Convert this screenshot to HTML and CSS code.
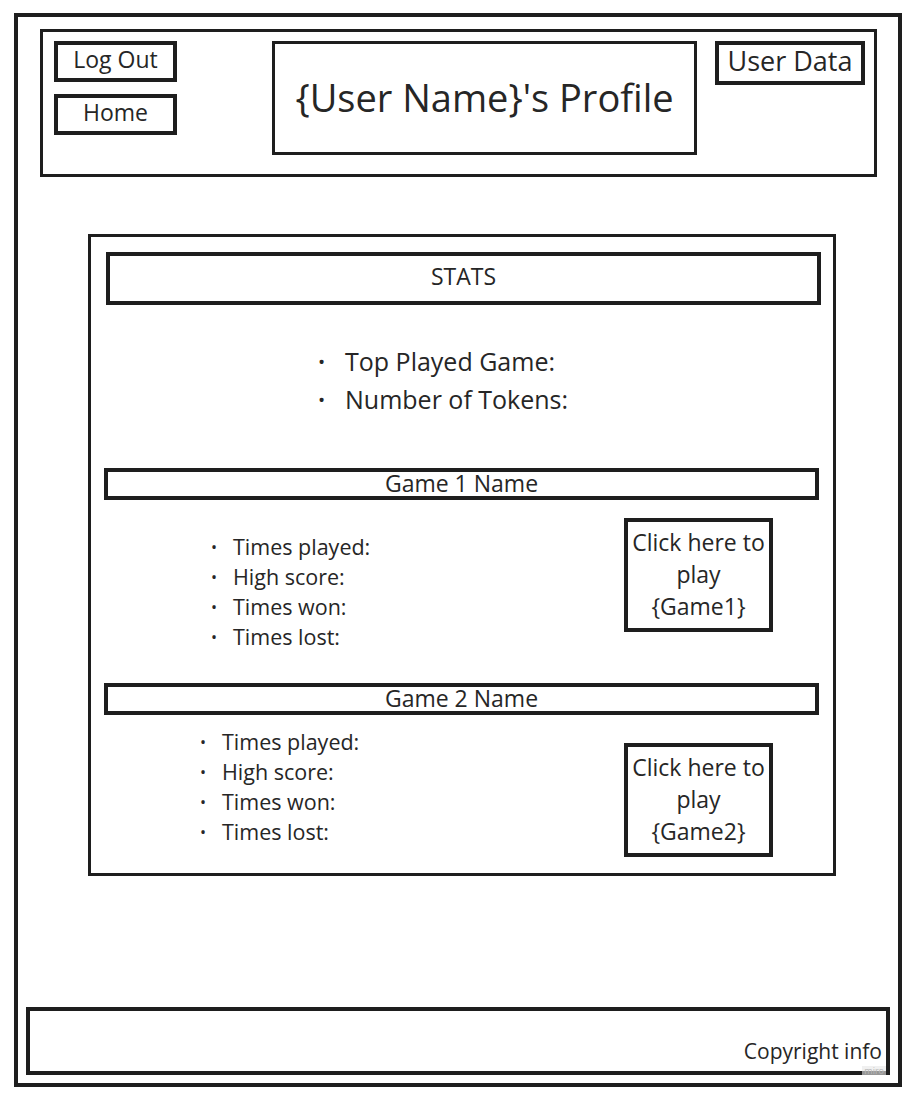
FILE: index.html
```html
<!DOCTYPE html>
<html lang="en">
<head>
  <meta charset="UTF-8">
  <meta name="viewport" content="width=device-width, initial-scale=1.0">
  <title>Profile</title>
  <link rel="stylesheet" href="styles.css">
</head>
<body>
  <div class="frame">
    <header class="top-bar">
      <nav class="nav-buttons">
        <div class="box-btn">Log Out</div>
        <div class="box-btn">Home</div>
      </nav>
      <div class="title-box">{User Name}'s Profile</div>
      <div class="user-data">User Data</div>
    </header>

    <section class="stats">
      <div class="stats-bar">STATS</div>
      <ul class="summary">
        <li>Top Played Game:</li>
        <li>Number of Tokens:</li>
      </ul>

      <div class="game-bar">Game 1 Name</div>
      <div class="game-body game-one">
        <ul class="game-list">
          <li>Times played:</li>
          <li>High score:</li>
          <li>Times won:</li>
          <li>Times lost:</li>
        </ul>
        <div class="play-box">Click here to<br>play<br>{Game1}</div>
      </div>

      <div class="game-bar">Game 2 Name</div>
      <div class="game-body game-two">
        <ul class="game-list">
          <li>Times played:</li>
          <li>High score:</li>
          <li>Times won:</li>
          <li>Times lost:</li>
        </ul>
        <div class="play-box">Click here to<br>play<br>{Game2}</div>
      </div>
    </section>

    <footer class="footer">
      <span class="copyright">Copyright info</span>
      <span class="watermark">miro</span>
    </footer>
  </div>
</body>
</html>
```

FILE: styles.css
```css
* {
  box-sizing: border-box;
}

body {
  margin: 0;
  font-family: "Open Sans", sans-serif;
  color: #262626;
  background: #fff;
}

.frame {
  display: flex;
  flex-direction: column;
  width: 888px;
  height: 1074px;
  margin: 13px 0 0 14px;
  border: 4px solid #1e1e1e;
}

.top-bar {
  display: flex;
  align-items: flex-start;
  height: 148px;
  margin: 12px 21px 0 22px;
  padding: 9px 0 0 11px;
  border: 3px solid #1e1e1e;
}

.nav-buttons {
  display: flex;
  flex-direction: column;
  gap: 12px;
  width: 123px;
}

.box-btn {
  height: 41px;
  border: 4px solid #1e1e1e;
  font-size: 23px;
  line-height: 29px;
  text-align: center;
}

.title-box {
  display: flex;
  align-items: center;
  justify-content: center;
  width: 425px;
  height: 114px;
  margin-left: 95px;
  border: 3px solid #1e1e1e;
  font-size: 38px;
  padding-bottom: 2px;
}

.user-data {
  width: 150px;
  height: 44px;
  margin-left: 18px;
  border: 4px solid #1e1e1e;
  font-size: 27px;
  line-height: 32px;
  text-align: center;
  white-space: nowrap;
}

.stats {
  width: 748px;
  height: 642px;
  margin: 57px 0 0 70px;
  padding: 15px 12px 0 15px;
  border: 3px solid #1e1e1e;
}

.stats-bar {
  height: 53px;
  border: 4px solid #1e1e1e;
  font-size: 23px;
  line-height: 40px;
  text-align: center;
}

ul {
  margin: 0;
  padding: 0;
  list-style: none;
}

.summary {
  margin: 38px 0 49px 212px;
  font-size: 25px;
  line-height: 37px;
}

.summary li::before {
  content: "\2022";
  display: inline-block;
  width: 27px;
  font-size: 19px;
  vertical-align: 2px;
}

.game-bar {
  height: 32px;
  margin-left: -2px;
  margin-right: 2px;
  border: 4px solid #1e1e1e;
  font-size: 23px;
  line-height: 22px;
  text-align: center;
}

.game-body {
  display: flex;
  justify-content: space-between;
  align-items: flex-start;
  padding-right: 48px;
}

.game-one {
  height: 183px;
  padding-left: 105px;
}

.game-one .game-list {
  margin-top: 32px;
}

.game-one .play-box {
  margin-top: 18px;
}

.game-two {
  padding-left: 94px;
}

.game-two .game-list {
  margin-top: 12px;
}

.game-two .play-box {
  margin-top: 28px;
}

.game-list {
  font-size: 21.5px;
  line-height: 30px;
}

.game-list li::before {
  content: "\2022";
  display: inline-block;
  width: 22px;
  font-size: 16px;
  vertical-align: 2px;
}

.play-box {
  width: 149px;
  height: 114px;
  padding: 4px 0 0;
  border: 4px solid #1e1e1e;
  font-size: 23px;
  line-height: 32px;
  text-align: center;
  white-space: nowrap;
}

.footer {
  position: relative;
  display: flex;
  justify-content: flex-end;
  align-items: flex-end;
  height: 68px;
  margin: auto 8px 8px 8px;
  padding: 0 4px 9px 0;
  border: 4px solid #1e1e1e;
}

.copyright {
  font-size: 21px;
  line-height: 22px;
}

.watermark {
  position: absolute;
  right: 0;
  bottom: -4px;
  padding: 0 2px;
  font-size: 9px;
  line-height: 9px;
  color: #b8b8b8;
  background: rgba(230, 230, 230, 0.6);
}
```
